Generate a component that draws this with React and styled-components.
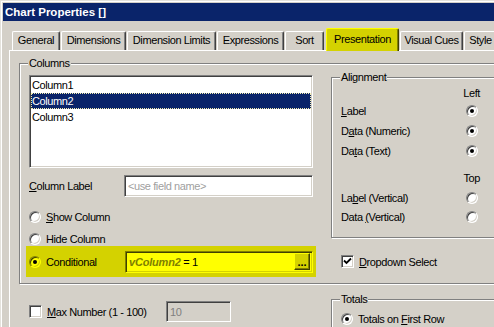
import React from "react";
import styled, { createGlobalStyle } from "styled-components";

const GlobalStyle = createGlobalStyle`
  html, body {
    margin: 0;
    padding: 0;
    background: #d4d0c8;
  }
  body {
    width: 494px;
    height: 327px;
    overflow: hidden;
    font-family: "Liberation Sans", Arial, sans-serif;
    font-size: 11px;
    letter-spacing: -0.4px;
    color: #000;
  }
  u {
    text-decoration-thickness: 1px;
    text-underline-offset: 1px;
  }
`;

const Window = styled.div`
  width: 494px;
  height: 327px;
  box-sizing: border-box;
  padding: 3px 0 0 3px;
  background: #d4d0c8;
  box-shadow: inset 1px 1px 0 #e4e2dc, inset 2px 2px 0 #fff;
  overflow: hidden;
`;

const TitleBar = styled.div`
  height: 18px;
  width: 600px;
  background: #0a246a;
  color: #fff;
  font-weight: bold;
  font-size: 11.5px;
  letter-spacing: 0;
  line-height: 18px;
  padding-left: 2px;
`;

const TabStrip = styled.div`
  display: flex;
  align-items: flex-end;
  gap: 1px;
  height: 29px;
  box-sizing: border-box;
  padding-left: 9px;
  width: 600px;
`;

const Tab = styled.div`
  flex: none;
  width: ${(p) => p.$w}px;
  height: ${(p) => (p.$active ? 23 : 19)}px;
  margin-bottom: ${(p) => (p.$active ? -1 : 0)}px;
  margin-left: ${(p) => (p.$active ? 1 : 0)}px;
  position: relative;
  z-index: ${(p) => (p.$active ? 2 : 0)};
  box-sizing: border-box;
  border-top: 1px solid ${(p) => (p.$active ? "#ffff00" : "#fff")};
  border-left: 1px solid ${(p) => (p.$active ? "#ffff00" : "#fff")};
  border-right: 1px solid ${(p) => (p.$active ? "#404000" : "#404040")};
  border-radius: 2px 2px 0 0;
  box-shadow: inset -1px 0 0 ${(p) => (p.$active ? "#808000" : "#808080")};
  background: ${(p) => (p.$active ? "#d4d200" : "#d4d0c8")};
  text-align: center;
  line-height: ${(p) => (p.$active ? 20 : 17)}px;
  white-space: nowrap;
`;

const Panel = styled.div`
  margin-left: 6px;
  width: 600px;
  height: 300px;
  box-sizing: border-box;
  border-top: 1px solid #fff;
  border-left: 1px solid #fff;
  padding: 6px 0 0 9px;
`;

const Group = styled.fieldset`
  margin: 0;
  min-width: 0;
  box-sizing: border-box;
  width: ${(p) => p.$w}px;
  padding: 0 0 ${(p) => p.$pb || 0}px 9px;
  border: 1px solid #808080;
  box-shadow: 1px 1px 0 #fff, inset 1px 1px 0 #fff;
`;

const Legend = styled.legend`
  padding: 0 1px;
  margin-left: -1px;
  line-height: 13px;
  background: #d4d0c8;
`;

const Columns = styled.div`
  display: flex;
  align-items: flex-start;
`;

const LeftCol = styled.div`
  width: 284px;
  flex: none;
  padding-top: 5px;
`;

const RightCol = styled.div`
  flex: none;
  margin-left: 18px;
  margin-top: 1px;
`;

const ListBox = styled.div`
  height: 93px;
  box-sizing: border-box;
  background: #fff;
  border: 1px solid;
  border-color: #808080 #fff #fff #808080;
  box-shadow: inset 1px 1px 0 #404040, inset -1px -1px 0 #d4d0c8;
  padding: 1px;
`;

const ListItem = styled.div`
  height: 16px;
  line-height: 16px;
  padding-left: 1px;
  background: ${(p) => (p.$selected ? "#0a246a" : "transparent")};
  color: ${(p) => (p.$selected ? "#fff" : "#000")};
  outline: ${(p) => (p.$selected ? "1px dotted #f4eeb0" : "none")};
  outline-offset: -1px;
`;

const FieldRow = styled.div`
  display: flex;
  align-items: center;
  margin-top: ${(p) => p.$mt || 0}px;
`;

const FieldLabel = styled.div`
  width: ${(p) => p.$w}px;
  flex: none;
  display: flex;
  align-items: center;
  gap: 5px;
  white-space: nowrap;
`;

const TextInput = styled.div`
  width: ${(p) => p.$w}px;
  height: ${(p) => p.$h || 22}px;
  flex: none;
  box-sizing: border-box;
  display: flex;
  align-items: center;
  padding: 0 2px 0 3px;
  background: ${(p) => p.$bg || "#fff"};
  color: ${(p) => p.$color || "#000"};
  border: 1px solid;
  border-color: ${(p) =>
    p.$tint ? "#808000 #ffff00 #ffff00 #808000" : "#808080 #fff #fff #808080"};
  box-shadow: ${(p) =>
    p.$tint
      ? "inset 1px 1px 0 #404000, inset -1px -1px 0 #d4d200"
      : "inset 1px 1px 0 #404040, inset -1px -1px 0 #d4d0c8"};
  white-space: nowrap;
`;

const RadioRow = styled.div`
  display: flex;
  align-items: center;
  gap: 5px;
  height: 13px;
  margin-top: ${(p) => p.$mt || 0}px;
  white-space: nowrap;
`;

const Radio = styled.span`
  flex: none;
  width: 12px;
  height: 12px;
  box-sizing: border-box;
  border-radius: 50%;
  border: 1px solid;
  border-color: ${(p) =>
    p.$tint ? "#808000 #ffff00 #ffff00 #808000" : "#808080 #fff #fff #808080"};
  box-shadow: ${(p) =>
    p.$tint
      ? "inset 1px 1px 0 #404000, inset -1px -1px 0 #d4d200"
      : "inset 1px 1px 0 #404040, inset -1px -1px 0 #d4d0c8"};
  background: ${(p) => (p.$tint ? "#ffff00" : "#fff")};
  display: flex;
  align-items: center;
  justify-content: center;

  &::after {
    content: "";
    width: 4px;
    height: 4px;
    border-radius: 50%;
    background: #000;
    display: ${(p) => (p.$checked ? "block" : "none")};
  }
`;

const CheckBox = styled.span`
  flex: none;
  width: 13px;
  height: 13px;
  box-sizing: border-box;
  border: 1px solid;
  border-color: #808080 #fff #fff #808080;
  box-shadow: inset 1px 1px 0 #404040, inset -1px -1px 0 #d4d0c8;
  background: #fff;
  display: flex;
  align-items: center;
  justify-content: center;
`;

const Highlight = styled.div`
  display: flex;
  align-items: center;
  height: 31px;
  width: 290px;
  margin: 1px 0 0 -3px;
  padding: 0 3px;
  box-sizing: border-box;
  background: #d4d200;
`;

const Expr = styled.span`
  flex: 1;
  white-space: nowrap;
  overflow: hidden;
`;

const Variable = styled.span`
  font-style: italic;
  font-weight: bold;
  color: #808000;
  letter-spacing: -0.2px;
`;

const DotsButton = styled.span`
  flex: none;
  width: 16px;
  height: 17px;
  box-sizing: border-box;
  background: #d4d200;
  border: 1px solid;
  border-color: #ffff00 #404000 #404000 #ffff00;
  box-shadow: inset -1px -1px 0 #808000;
  font-weight: bold;
  letter-spacing: 0;
  line-height: 17px;
  text-align: center;
`;

const AlignRow = styled.div`
  display: flex;
  align-items: center;
  justify-content: ${(p) => (p.$head ? "flex-end" : "space-between")};
  width: 141px;
  height: ${(p) => p.$h}px;
  margin-top: ${(p) => p.$mt || 0}px;
  padding-right: ${(p) => (p.$head ? 2 : 0)}px;
  box-sizing: border-box;
  white-space: nowrap;
`;

const RadioCell = styled.span`
  width: 20px;
  display: flex;
  justify-content: center;
`;

const CheckRow = styled.div`
  display: flex;
  align-items: center;
  gap: 5px;
  height: 13px;
  margin-top: ${(p) => p.$mt || 0}px;
  padding-left: ${(p) => p.$pl || 0}px;
  white-space: nowrap;
`;

const BottomRow = styled.div`
  display: flex;
  align-items: flex-start;
  margin-top: 9px;
`;

const BottomLeft = styled.div`
  width: 312px;
  flex: none;
  box-sizing: border-box;
  padding: 8px 0 0 10px;
`;

function Check() {
  return (
    <svg width="9" height="9" viewBox="0 0 9 9">
      <path d="M1 3.5 L3.5 6 L8 1.5" stroke="#000" strokeWidth="1.8" fill="none" />
    </svg>
  );
}

const tabs = [
  ["General", 48],
  ["Dimensions", 65],
  ["Dimension Limits", 89],
  ["Expressions", 67],
  ["Sort", 39],
  ["Presentation", 73, true],
  ["Visual Cues", 63],
  ["Style", 33],
];

const alignRows = [
  { h: 20, label: <><u>L</u>abel</>, checked: true },
  { h: 20, label: <>D<u>a</u>ta (Numeric)</>, checked: true },
  { h: 19, label: <>Da<u>t</u>a (Text)</>, checked: true },
];

export default function App() {
  return (
    <>
      <GlobalStyle />
      <Window>
        <TitleBar>Chart Properties []</TitleBar>
        <TabStrip>
          {tabs.map(([name, w, active]) => (
            <Tab key={name} $w={w} $active={active}>
              {name}
            </Tab>
          ))}
        </TabStrip>
        <Panel>
          <Group $w={560} $pb={6}>
            <Legend>Columns</Legend>
            <Columns>
              <LeftCol>
                <ListBox>
                  <ListItem>Column1</ListItem>
                  <ListItem $selected>Column2</ListItem>
                  <ListItem>Column3</ListItem>
                </ListBox>
                <FieldRow $mt={7}>
                  <FieldLabel $w={95}>
                    <span>
                      <u>C</u>olumn Label
                    </span>
                  </FieldLabel>
                  <TextInput $w={189} $color="#a0a0a0">
                    &lt;use field name&gt;
                  </TextInput>
                </FieldRow>
                <RadioRow $mt={13}>
                  <Radio />
                  <span>
                    <u>S</u>how Column
                  </span>
                </RadioRow>
                <RadioRow $mt={9}>
                  <Radio />
                  <span>Hide Column</span>
                </RadioRow>
                <Highlight>
                  <FieldLabel $w={96}>
                    <Radio $tint $checked />
                    <span>Conditional</span>
                  </FieldLabel>
                  <TextInput $w={188} $bg="#ffff00" $tint>
                    <Expr>
                      <Variable>vColumn2</Variable> = 1
                    </Expr>
                    <DotsButton>...</DotsButton>
                  </TextInput>
                </Highlight>
              </LeftCol>
              <RightCol>
                <Group $w={175} $pb={13}>
                  <Legend>Alignment</Legend>
                  <AlignRow $head $h={17}>
                    Left
                  </AlignRow>
                  {alignRows.map((r, i) => (
                    <AlignRow key={i} $h={r.h}>
                      <span>{r.label}</span>
                      <RadioCell>
                        <Radio $checked={r.checked} />
                      </RadioCell>
                    </AlignRow>
                  ))}
                  <AlignRow $head $h={18} $mt={9}>
                    Top
                  </AlignRow>
                  <AlignRow $h={22}>
                    <span>
                      La<u>b</u>el (Vertical)
                    </span>
                    <RadioCell>
                      <Radio />
                    </RadioCell>
                  </AlignRow>
                  <AlignRow $h={15}>
                    <span>
                      Data <u>(</u>Vertical)
                    </span>
                    <RadioCell>
                      <Radio />
                    </RadioCell>
                  </AlignRow>
                </Group>
                <CheckRow $mt={17} $pl={10}>
                  <CheckBox>
                    <Check />
                  </CheckBox>
                  <span>
                    <u>D</u>ropdown Select
                  </span>
                </CheckRow>
              </RightCol>
            </Columns>
          </Group>
          <BottomRow>
            <BottomLeft>
              <FieldRow>
                <FieldLabel $w={137}>
                  <CheckBox />
                  <span>
                    <u>M</u>ax Number (1 - 100)
                  </span>
                </FieldLabel>
                <TextInput $w={65} $h={21} $bg="#d4d0c8" $color="#808080">
                  10
                </TextInput>
              </FieldRow>
            </BottomLeft>
            <Group $w={200} $pb={20}>
              <Legend>Totals</Legend>
              <CheckRow $mt={6}>
                <Radio $checked />
                <span>
                  Totals on <u>F</u>irst Row
                </span>
              </CheckRow>
            </Group>
          </BottomRow>
        </Panel>
      </Window>
    </>
  );
}
